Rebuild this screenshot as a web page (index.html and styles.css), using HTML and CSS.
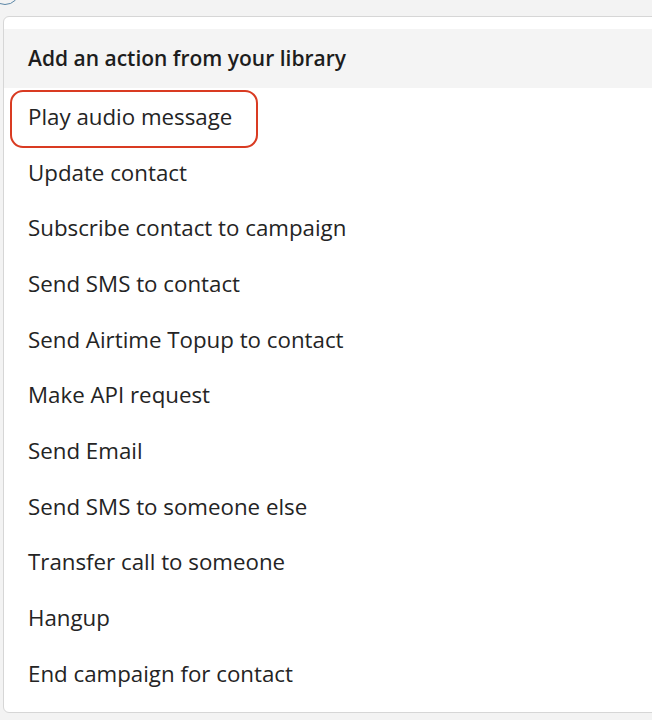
FILE: index.html
```html
<!DOCTYPE html>
<html>
<head>
<meta charset="utf-8">
<link rel="stylesheet" href="styles.css">
</head>
<body>
<div class="backdrop">
  <div class="topbar"><span class="avatar"></span></div>
  <div class="menu">
    <div class="menu-header">Add an action from your library</div>
    <ul class="menu-list">
      <li class="menu-item highlighted">Play audio message</li>
      <li class="menu-item">Update contact</li>
      <li class="menu-item">Subscribe contact to campaign</li>
      <li class="menu-item">Send SMS to contact</li>
      <li class="menu-item">Send Airtime Topup to contact</li>
      <li class="menu-item">Make API request</li>
      <li class="menu-item">Send Email</li>
      <li class="menu-item">Send SMS to someone else</li>
      <li class="menu-item">Transfer call to someone</li>
      <li class="menu-item">Hangup</li>
      <li class="menu-item">End campaign for contact</li>
    </ul>
  </div>
</div>
</body>
</html>
```
FILE: styles.css
```css
html, body {
  margin: 0;
  padding: 0;
  background: #f3f3f3;
  width: 652px;
  height: 720px;
  overflow: hidden;
}
.backdrop {
  font-family: "Open Sans", Lato, sans-serif;
  color: #222;
}
.topbar {
  height: 16px;
  overflow: hidden;
}
.avatar {
  display: block;
  width: 30px;
  height: 30px;
  margin-top: -25px;
  margin-left: -10px;
  border: 1.5px solid #5b86a6;
  border-radius: 50%;
  box-sizing: border-box;
}
.menu {
  margin-left: 3px;
  width: 700px;
  height: 697px;
  background: #fff;
  border: 1px solid #d6d6d6;
  border-radius: 6px;
  box-sizing: border-box;
  padding-top: 12px;
}
.menu-header {
  height: 59px;
  background: #f4f4f4;
  display: flex;
  align-items: center;
  padding-left: 24px;
  padding-bottom: 2px;
  box-sizing: border-box;
  font-size: 21px;
  font-weight: 600;
  color: #1d1d1d;
}
.menu-list {
  list-style: none;
  margin: 0;
  padding: 0;
}
.menu-item {
  height: 55.7px;
  display: flex;
  align-items: center;
  padding-left: 24px;
  padding-top: 1px;
  box-sizing: border-box;
  font-size: 22.3px;
  color: #242424;
  position: relative;
}
.menu-item.highlighted::after {
  content: "";
  position: absolute;
  left: 6px;
  top: 2px;
  width: 248px;
  height: 58px;
  border: 2px solid #d93b22;
  border-radius: 13px;
  box-sizing: border-box;
}
```
